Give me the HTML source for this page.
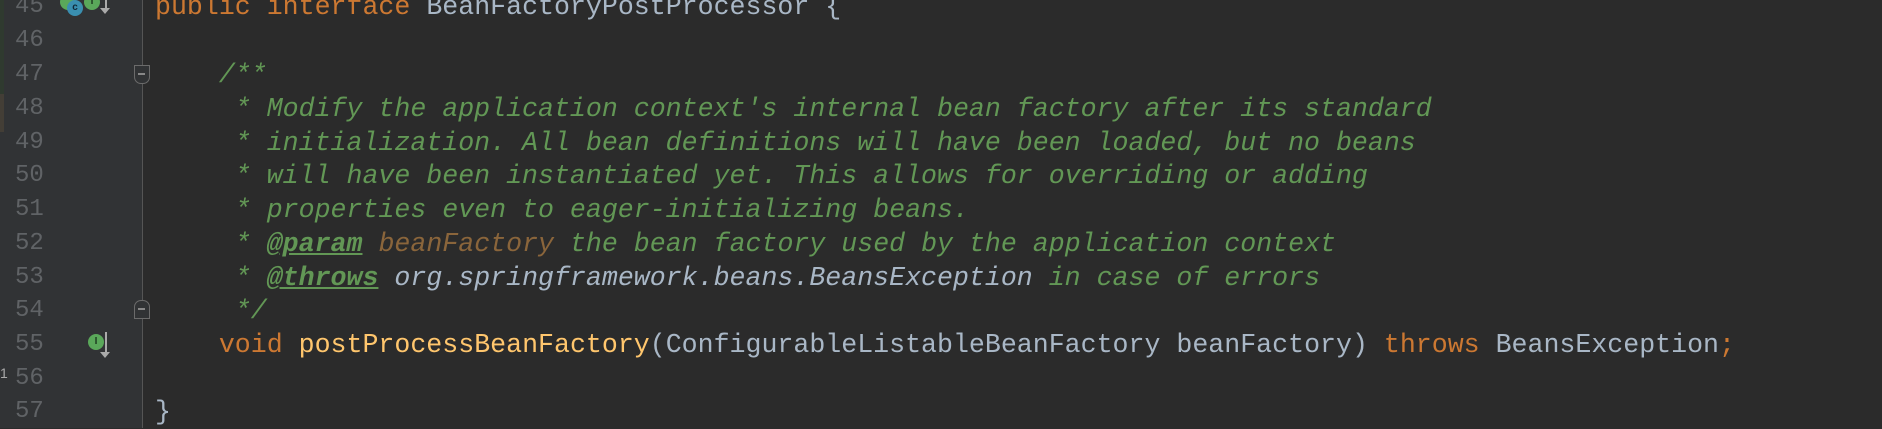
<!DOCTYPE html>
<html><head><style>
body{margin:0;width:1882px;height:428px;overflow:hidden;background:#2b2b2b;position:relative;font-family:"Liberation Mono","DejaVu Sans Mono",monospace;font-size:26.6px}
#gut{position:absolute;left:0;top:0;width:142px;height:428px;background:#313335}
#sep{position:absolute;left:142px;top:0;width:1px;height:428px;background:#555}
.n{position:absolute;left:15px;height:34px;line-height:34px;color:#606366;font-size:24px}
.l{position:absolute;left:155px;height:34px;line-height:34px;white-space:pre;color:#a9b7c6}
.c{color:#629755;font-style:italic}
.t{color:#629755;font-style:italic;font-weight:bold;text-decoration:underline}
.p{color:#8a653b;font-style:italic}
.r{color:#a9b7c6;font-style:italic}
.k{color:#cc7832}.m{color:#ffc66d}
.fold{position:absolute;left:134px;width:16px;height:19px;border:1.5px solid #6b6b6b;background:#313335;box-sizing:border-box}
.fold:after{content:"";position:absolute;left:3px;top:7px;width:7px;height:1.5px;background:#888}
.ic{position:absolute;width:16px;height:16px;border-radius:50%;font:bold 10px "Liberation Sans",sans-serif;text-align:center;line-height:16px;color:#1d3b20}
</style></head><body>
<div id="gut"></div>
<div style="position:absolute;left:0;top:0;width:4px;height:94px;background:#2f3a2f"></div>
<div style="position:absolute;left:0;top:94px;width:4px;height:38px;background:#433e36"></div>
<div style="position:absolute;left:0;top:365px;width:3px;height:20px;color:#aaa;font-size:14px;font-family:'Liberation Sans',sans-serif">1</div>
<div id="sep"></div>
<div class="n" style="top:-10px">45</div>
<div class="n" style="top:24px">46</div>
<div class="n" style="top:58px">47</div>
<div class="n" style="top:92px">48</div>
<div class="n" style="top:126px">49</div>
<div class="n" style="top:159px">50</div>
<div class="n" style="top:193px">51</div>
<div class="n" style="top:227px">52</div>
<div class="n" style="top:261px">53</div>
<div class="n" style="top:294px">54</div>
<div class="n" style="top:328px">55</div>
<div class="n" style="top:362px">56</div>
<div class="n" style="top:395px">57</div>
<div class="ic" style="left:60px;top:-6px;background:#5aa85a"></div>
<div class="ic" style="left:67px;top:0px;background:#3a8fb0;color:#102838">c</div>
<div class="ic" style="left:84px;top:-6px;background:#5aa85a">I</div>
<div style="position:absolute;left:105px;top:-10px;width:1.5px;height:18px;background:#aaa"></div>
<div style="position:absolute;left:100px;top:8px;border-left:5.5px solid transparent;border-right:5.5px solid transparent;border-top:6px solid #aaa"></div>
<div class="ic" style="left:88px;top:334px;background:#5aa85a">I</div>
<div style="position:absolute;left:105px;top:332px;width:1.5px;height:20px;background:#aaa"></div>
<div style="position:absolute;left:100px;top:352px;border-left:5.5px solid transparent;border-right:5.5px solid transparent;border-top:6px solid #aaa"></div>
<div class="fold" style="top:65px;border-radius:0 0 7px 7px"></div>
<div class="fold" style="top:300px;border-radius:7px 7px 0 0"></div>
<div class="l" style="top:-10px"><span class="k">public interface </span>BeanFactoryPostProcessor {</div>
<div class="l c" style="top:58px">    /**</div>
<div class="l c" style="top:92px">     * Modify the application context's internal bean factory after its standard</div>
<div class="l c" style="top:126px">     * initialization. All bean definitions will have been loaded, but no beans</div>
<div class="l c" style="top:159px">     * will have been instantiated yet. This allows for overriding or adding</div>
<div class="l c" style="top:193px">     * properties even to eager-initializing beans.</div>
<div class="l c" style="top:227px">     * <span class="t">@param</span> <span class="p">beanFactory</span> the bean factory used by the application context</div>
<div class="l c" style="top:261px">     * <span class="t">@throws</span> <span class="r">org.springframework.beans.BeansException</span> in case of errors</div>
<div class="l c" style="top:294px">     */</div>
<div class="l" style="top:328px">    <span class="k">void </span><span class="m">postProcessBeanFactory</span>(ConfigurableListableBeanFactory beanFactory) <span class="k">throws </span>BeansException<span class="k">;</span></div>
<div class="l" style="top:395px">}</div>
</body></html>
